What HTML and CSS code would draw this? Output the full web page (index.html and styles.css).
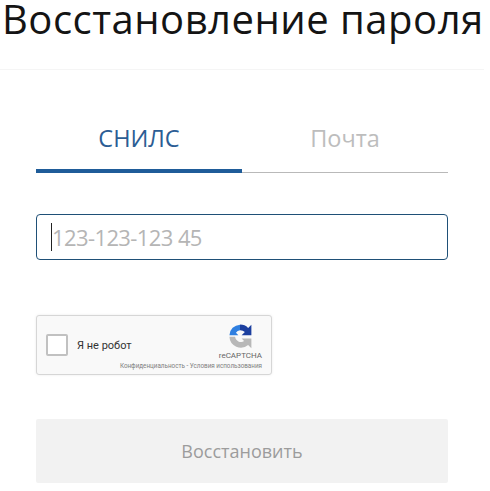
FILE: index.html
```html
<!DOCTYPE html>
<html lang="en">
<head>
    <meta charset="UTF-8">
    <meta name="viewport" content="width=device-width, initial-scale=1.0">
    <title>Восстановление пароля</title>
    <link rel="stylesheet" href="styles.css">
</head>
<body>
    <header class="page-header">
        <h1>Восстановление пароля</h1>
    </header>
    <form class="restore-form">
        <div class="tabs">
            <a class="tab tab-active" href="#">СНИЛС</a>
            <a class="tab" href="#">Почта</a>
        </div>
        <div class="snils-field">
            <span class="caret"></span>
            <span class="placeholder">123-123-123 45</span>
        </div>
        <div class="captcha">
            <span class="captcha-check"></span>
            <span class="captcha-label">Я не робот</span>
            <div class="captcha-brand">
                <svg class="captcha-logo" viewBox="0 0 32 32" width="26" height="26">
                    <path fill="#2f7fe0" d="M3 15A13.500 13.500 0 0 1 16 2V9A7 7 0 0 0 11 12L14 15Z"/>
                    <path fill="#1c3f9f" d="M16 2A14 14 0 0 1 26 6L30 2V15H18L22 11A9 9 0 0 0 16 9Z"/>
                    <path fill="#b8b8b8" d="M3 17H10A7 7 0 0 0 21 22L18 19H30V31L26 27A14 14 0 0 1 3 17Z"/>
                </svg>
                <span class="captcha-name">reCAPTCHA</span>
                <span class="captcha-links">Конфиденциальность - Условия использования</span>
            </div>
        </div>
        <button class="submit" type="button" disabled>Восстановить</button>
    </form>
</body>
</html>
```

FILE: styles.css
```css
body {
    font-family: "Open Sans", sans-serif;
    margin: 0;
    padding: 0;
    width: 484px;
    background-color: #fff;
}

.page-header {
    height: 69px;
    border-bottom: 1px solid #f5f5f5;
}

.page-header h1 {
    margin: 0;
    padding-left: 2px;
    font-size: 40px;
    font-weight: 400;
    line-height: 38px;
    color: #141414;
    letter-spacing: 0.5px;
    white-space: nowrap;
}

.restore-form {
    padding: 0 36px;
}

.tabs {
    display: flex;
    margin-top: 50px;
    border-bottom: 1px solid #b9b9b9;
}

.tab {
    flex: 1;
    height: 52px;
    line-height: 37px;
    text-align: center;
    font-size: 23.500px;
    color: #bdbdbd;
    text-decoration: none;
}

.tab-active {
    color: #2c5d94;
    border-bottom: 4px solid #1f5c99;
    height: 49px;
    margin-bottom: -1px;
}

.snils-field {
    display: flex;
    align-items: center;
    height: 44px;
    margin-top: 41px;
    padding-left: 14px;
    border: 1px solid #1f5077;
    border-radius: 4px;
}

.caret {
    width: 1px;
    height: 28px;
    background-color: #222;
}

.placeholder {
    font-size: 22px;
    letter-spacing: -0.6px;
    color: #b5b5b5;
}

.captcha {
    display: flex;
    align-items: center;
    width: 234px;
    height: 58px;
    margin-top: 55px;
    background-color: #f9f9f9;
    border: 1px solid #d6d6d6;
    border-radius: 3px;
    box-shadow: 0 0 3px rgba(0, 0, 0, 0.08);
    position: relative;
}

.captcha-check {
    width: 18px;
    height: 18px;
    margin-left: 9px;
    background-color: #fff;
    border: 2px solid #c1c1c1;
    border-radius: 2px;
}

.captcha-label {
    margin-left: 9px;
    font-family: Roboto, sans-serif;
    font-size: 11px;
    color: #333;
}

.captcha-brand {
    margin-left: auto;
    margin-right: 9px;
    margin-top: -7px;
    display: flex;
    flex-direction: column;
    align-items: center;
    font-family: Roboto, sans-serif;
    color: #666;
}

.captcha-logo {
    margin-bottom: 2px;
}

.captcha-name {
    font-size: 8px;
    line-height: 9px;
}

.captcha-links {
    position: absolute;
    right: 9px;
    bottom: 4px;
    font-size: 6.300px;
    line-height: 7px;
    white-space: nowrap;
    color: #808080;
}

.submit {
    display: block;
    width: 100%;
    height: 64px;
    margin-top: 44px;
    background-color: #f2f2f2;
    border: none;
    border-radius: 2px;
    font-family: "Open Sans", sans-serif;
    font-size: 18px;
    color: #9c9c9c;
}
```
